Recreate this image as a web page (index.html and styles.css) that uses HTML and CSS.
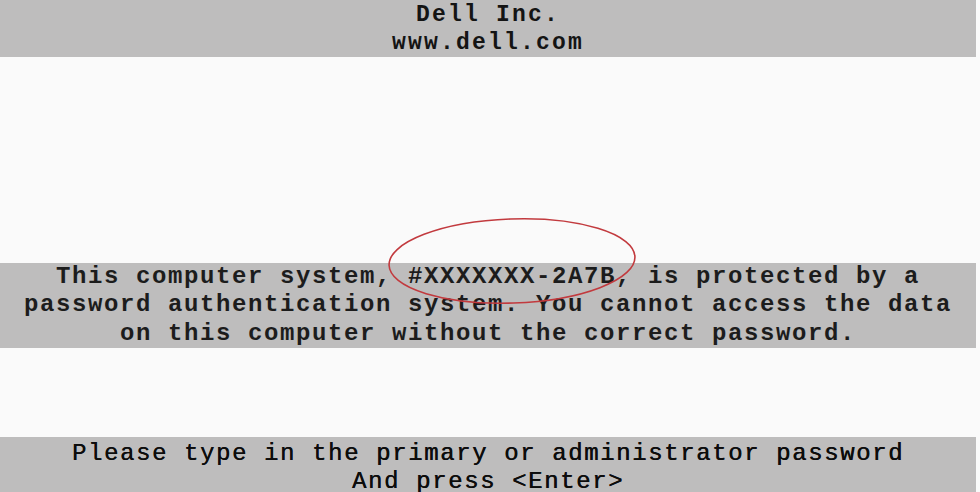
FILE: index.html
```html
<!DOCTYPE html>
<html>
<head>
<meta charset="utf-8">
<link rel="stylesheet" href="styles.css">
</head>
<body>
<div class="screen">
  <div class="band band-top">
    <div class="line">Dell Inc.</div>
    <div class="line">www.dell.com</div>
  </div>
  <div class="gap gap-a"></div>
  <div class="band band-mid">
    <div class="line">This computer system, #XXXXXXX-2A7B, is protected by a</div>
    <div class="line">password authentication system. You cannot access the data</div>
    <div class="line">on this computer without the correct password.</div>
  </div>
  <div class="gap gap-b"></div>
  <div class="band band-bot">
    <div class="line">Please type in the primary or administrator password</div>
    <div class="line">And press &lt;Enter&gt;</div>
  </div>
  <svg class="circle" width="256" height="96" viewBox="0 0 256 96">
    <ellipse cx="128" cy="48" rx="123" ry="42" transform="rotate(-2 128 48)" fill="none" stroke="#c23a3e" stroke-width="1.6"/>
  </svg>
</div>
</body>
</html>
```
FILE: styles.css
```css
html, body {
  margin: 0;
  padding: 0;
  background: #fafafa;
}
.screen {
  position: relative;
  width: 980px;
  height: 492px;
  display: flex;
  flex-direction: column;
  overflow: hidden;
}
.band {
  box-sizing: border-box;
  width: 976px;
  flex: none;
  background: #bebdbd;
  color: #141414;
  text-align: center;
}
.line {
  white-space: nowrap;
}
.band-top {
  height: 57px;
  padding-top: 1px;
  font-family: "Liberation Mono", monospace;
  font-weight: bold;
  font-size: 23px;
  letter-spacing: 2.2px;
  line-height: 28px;
}
.gap { flex: none; }
.gap-a { height: 206px; }
.band-mid {
  height: 85px;
  font-family: "Liberation Mono", monospace;
  font-weight: bold;
  font-size: 24px;
  letter-spacing: 1.6px;
  line-height: 28.3px;
  color: #1c1c1c;
}
.gap-b { height: 89px; }
.band-bot {
  height: 55px;
  padding-top: 3px;
  font-family: "Liberation Mono", monospace;
  font-size: 24px;
  letter-spacing: 1.6px;
  line-height: 28px;
  color: #0c0c0c;
  text-shadow: 0.4px 0 0 #0c0c0c;
}
.circle {
  position: absolute;
  left: 384px;
  top: 213px;
}
```
